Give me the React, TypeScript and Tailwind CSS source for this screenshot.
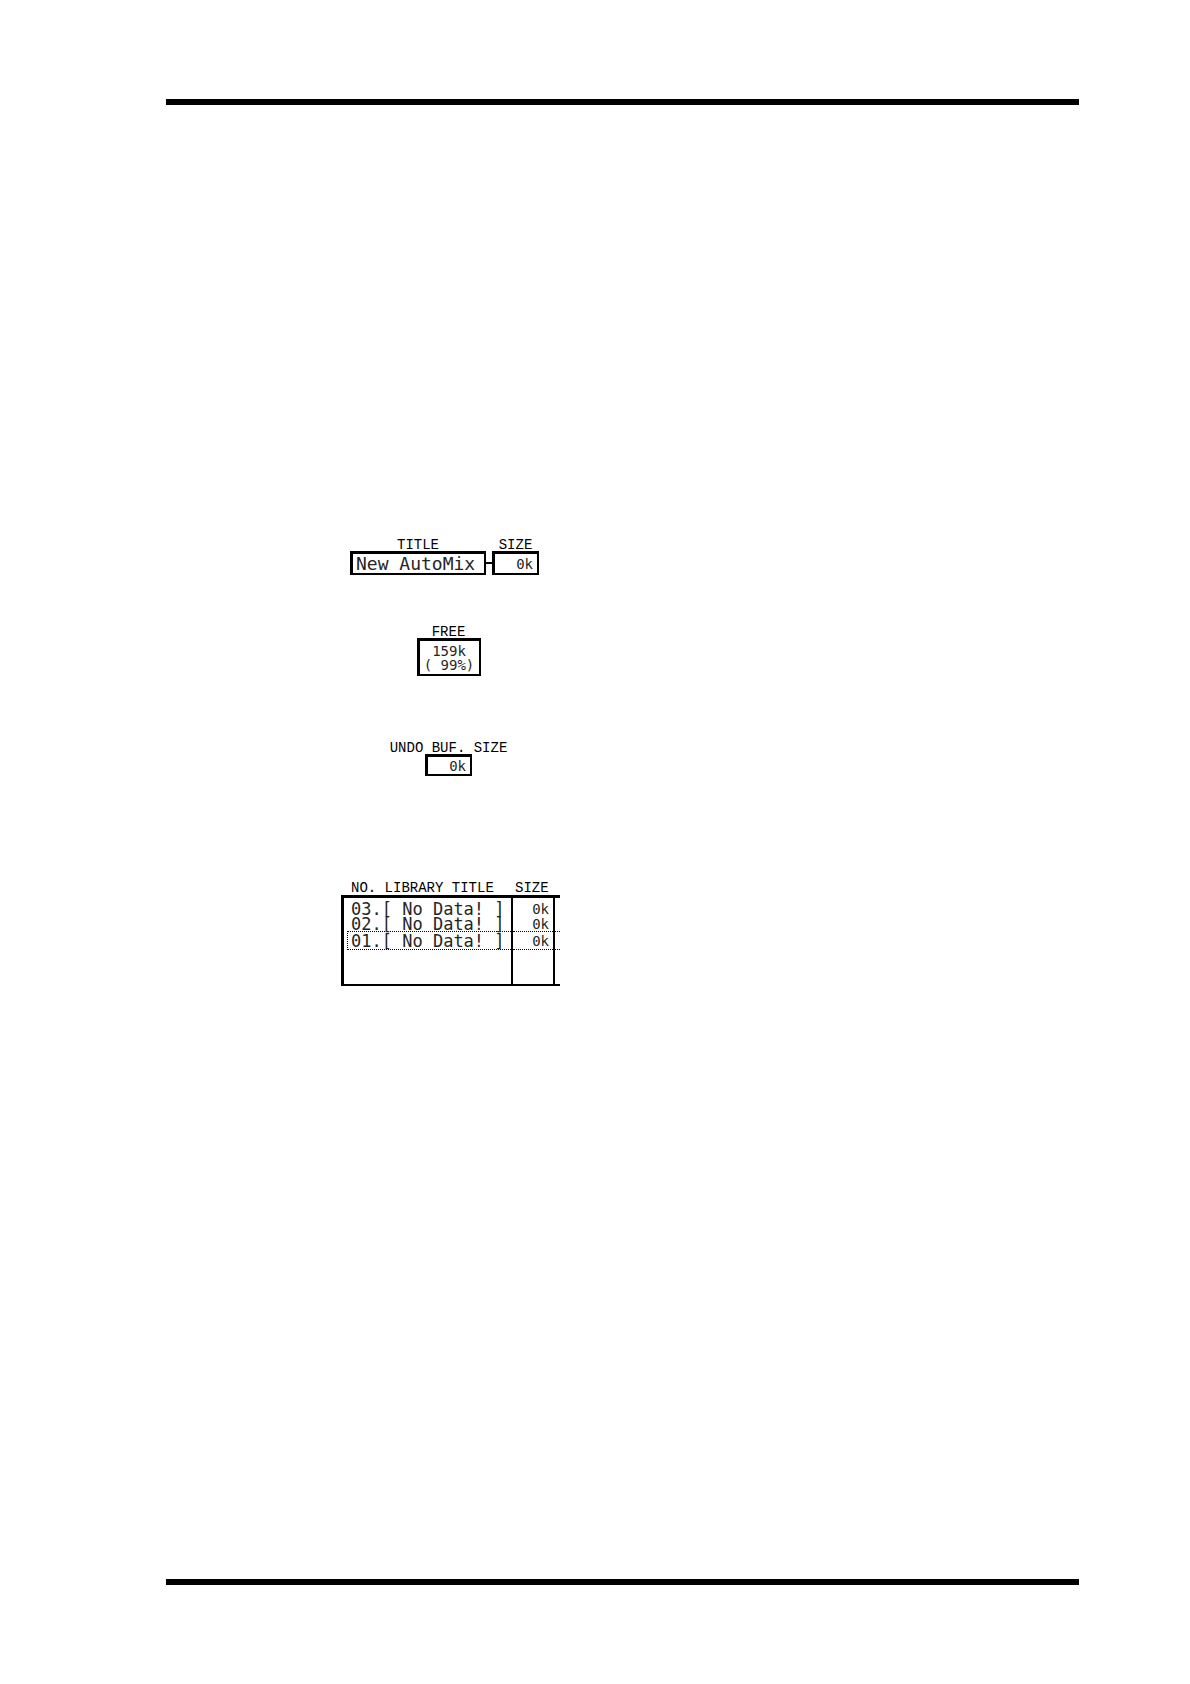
import type { ReactNode } from "react";

interface LibraryEntry {
  no: string;
  title: string;
  size: string;
  selected?: boolean;
}

const entries: LibraryEntry[] = [
  { no: "03", title: "[ No Data! ]", size: "0k" },
  { no: "02", title: "[ No Data! ]", size: "0k" },
  { no: "01", title: "[ No Data! ]", size: "0k", selected: true },
];

function Caption({ children }: { children: ReactNode }) {
  return (
    <div className="whitespace-pre font-['Liberation_Mono',monospace] text-sm leading-3 text-black">
      {children}
    </div>
  );
}

function LcdBox({ className, children }: { className: string; children: ReactNode }) {
  return (
    <div
      className={`whitespace-pre border-2 border-t-3 border-l-3 border-black text-neutral-800 ${className}`}
    >
      {children}
    </div>
  );
}

function LibraryRow({ entry }: { entry: LibraryEntry }) {
  // The current entry sits between two dotted lines
  const line = entry.selected ? "h-[19px] border-y border-dotted border-black" : "h-[15px]";

  return (
    <tr className="leading-[14px]">
      <td className="border-l-3 border-black pl-[3px]">
        <div
          className={`flex items-center whitespace-pre text-[17px] ${line} ${
            entry.selected ? "border-l pl-[3px]" : "pl-1"
          }`}
        >
          {entry.no}.{entry.title}
        </div>
      </td>
      <td className="border-l-2 border-black">
        <div className={`flex items-center justify-end pr-1 text-sm leading-[14px] ${line}`}>
          {entry.size}
        </div>
      </td>
      <td className="border-l-2 border-black">
        <div className={line}></div>
      </td>
    </tr>
  );
}

export default function App() {
  return (
    <main className="min-h-screen bg-white pt-[99px] pr-[111px] pb-[99px] pl-[166px] font-['DejaVu_Sans_Mono',monospace]">
      <div className="border-y-6 border-black pt-[434px] pb-[593px] pl-[175px]">
        <div className="flex w-[219px] flex-col">
          {/* Current automix */}
          <div className="flex items-end pl-[9px]">
            <div className="flex w-[136px] flex-col items-center">
              <Caption>TITLE</Caption>
              <LcdBox className="h-6 w-full pl-[3px] text-lg leading-[20px]">New AutoMix</LcdBox>
            </div>
            <div className="mb-[11px] h-0.5 w-1.5 bg-black"></div>
            <div className="flex w-[47px] flex-col items-center">
              <Caption>SIZE</Caption>
              <LcdBox className="h-6 w-full pr-1 text-right text-sm leading-[20px]">0k</LcdBox>
            </div>
          </div>

          {/* Free memory */}
          <div className="mt-[51px] mr-1 flex flex-col items-center">
            <Caption>FREE</Caption>
            <LcdBox className="w-16 pt-[3px] pb-0.5 text-center text-sm leading-[14px]">
              <div>159k</div>
              <div>( 99%)</div>
            </LcdBox>
          </div>

          <div className="mt-[66px] mr-1 flex flex-col items-center">
            <Caption>UNDO BUF. SIZE</Caption>
            <LcdBox className="h-[22px] w-[47px] pr-1 text-right text-sm leading-[18px]">0k</LcdBox>
          </div>

          {/* Library list */}
          <table className="mt-[106px] w-full table-fixed border-separate border-spacing-0 text-neutral-800">
            <thead>
              <tr className="text-left">
                <th className="w-[170px] border-b-3 border-black p-0 pb-px pl-[10px] font-normal">
                  <Caption>NO. LIBRARY TITLE</Caption>
                </th>
                <th className="w-[42px] border-b-3 border-black p-0 pb-px pl-1 font-normal">
                  <Caption>SIZE</Caption>
                </th>
                <td className="border-b-3 border-black"></td>
              </tr>
            </thead>
            <tbody>
              <tr className="h-[3px]">
                <td className="border-l-3 border-black"></td>
                <td className="border-l-2 border-black"></td>
                <td className="border-l-2 border-black"></td>
              </tr>
              {entries.map((entry) => (
                <LibraryRow key={entry.no} entry={entry} />
              ))}
              <tr className="h-[36px]">
                <td className="border-b-2 border-l-3 border-black"></td>
                <td className="border-b-2 border-l-2 border-black"></td>
                <td className="border-b-2 border-l-2 border-black"></td>
              </tr>
            </tbody>
          </table>
        </div>
      </div>
    </main>
  );
}
